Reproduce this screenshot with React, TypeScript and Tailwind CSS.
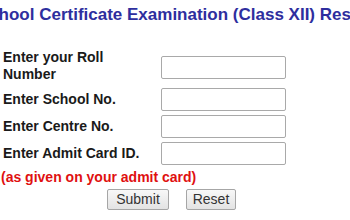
import React from 'react';

const fields = [
  { id: 'roll', label: 'Enter your Roll Number' },
  { id: 'school', label: 'Enter School No.' },
  { id: 'centre', label: 'Enter Centre No.' },
  { id: 'admit', label: 'Enter Admit Card ID.' },
];

export default function App() {
  return (
    <div className="w-[350px] h-[220px] overflow-hidden bg-white font-['Liberation_Sans',Arial,sans-serif]">
      <h1 className="mt-[5px] -ml-[77px] whitespace-nowrap text-[17px] leading-[20px] font-bold text-[#2e2e9e]">
        Indian School Certificate Examination (Class XII) Results
      </h1>

      <form className="mt-[24px] pl-[3px]" onSubmit={(e) => e.preventDefault()}>
        {/* first row wraps to two lines */}
        <div className="flex items-start">
          <label htmlFor="roll" className="w-[158px] pr-[40px] text-[14px] leading-[17px] font-bold text-[#1a1a1a]">
            {fields[0].label}
          </label>
          <input
            id="roll"
            type="text"
            className="mt-[7px] h-[23px] w-[125px] rounded-[2px] border border-[#a9a9a9] bg-white"
          />
        </div>

        {fields.slice(1).map((f, i) => (
          <div key={f.id} className={`flex items-center ${i === 0 ? 'mt-[5px]' : 'mt-[4px]'}`}>
            <label htmlFor={f.id} className="w-[158px] text-[14px] leading-[17px] font-bold text-[#1a1a1a] whitespace-nowrap">
              {f.label}
            </label>
            <input
              id={f.id}
              type="text"
              className="h-[23px] w-[125px] rounded-[2px] border border-[#a9a9a9] bg-white"
            />
          </div>
        ))}

        <p className="mt-[4px] -ml-[2px] text-[14px] leading-[17px] font-bold text-[#e01010] whitespace-nowrap">
          (as given on your admit card)
        </p>

        <div className="mt-[3px] ml-[104px] flex gap-[17px]">
          <button
            type="submit"
            className="h-[21px] w-[62px] rounded-[2px] border border-[#a6a6a6] bg-gradient-to-b from-[#f8f8f8] to-[#e3e3e3] text-[14px] leading-[19px] text-[#333]"
          >
            Submit
          </button>
          <button
            type="reset"
            className="h-[21px] w-[50px] rounded-[2px] border border-[#a6a6a6] bg-gradient-to-b from-[#f8f8f8] to-[#e3e3e3] text-[14px] leading-[19px] text-[#333]"
          >
            Reset
          </button>
        </div>
      </form>
    </div>
  );
}
